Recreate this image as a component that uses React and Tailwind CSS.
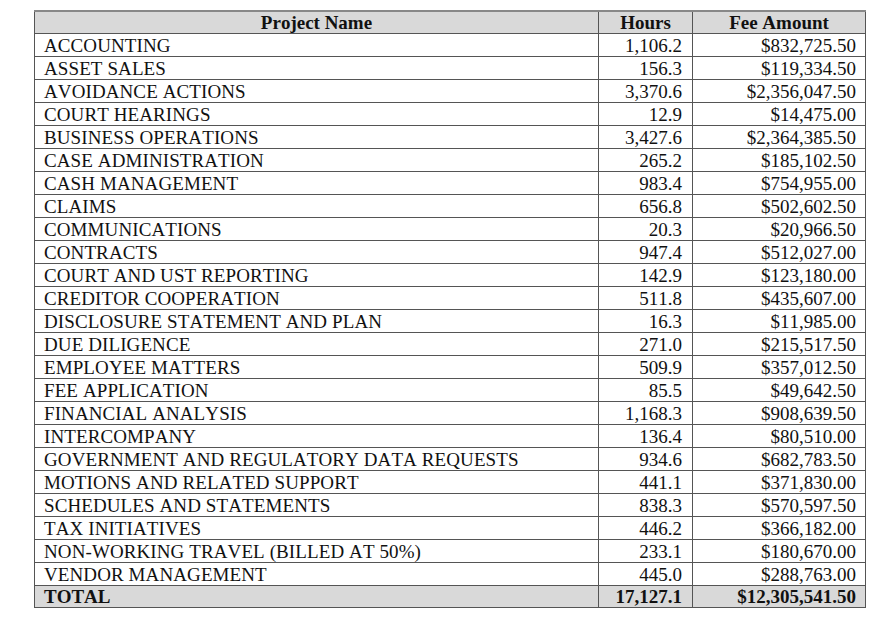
const rows = [
  ["ACCOUNTING", "1,106.2", "$832,725.50"],
  ["ASSET SALES", "156.3", "$119,334.50"],
  ["AVOIDANCE ACTIONS", "3,370.6", "$2,356,047.50"],
  ["COURT HEARINGS", "12.9", "$14,475.00"],
  ["BUSINESS OPERATIONS", "3,427.6", "$2,364,385.50"],
  ["CASE ADMINISTRATION", "265.2", "$185,102.50"],
  ["CASH MANAGEMENT", "983.4", "$754,955.00"],
  ["CLAIMS", "656.8", "$502,602.50"],
  ["COMMUNICATIONS", "20.3", "$20,966.50"],
  ["CONTRACTS", "947.4", "$512,027.00"],
  ["COURT AND UST REPORTING", "142.9", "$123,180.00"],
  ["CREDITOR COOPERATION", "511.8", "$435,607.00"],
  ["DISCLOSURE STATEMENT AND PLAN", "16.3", "$11,985.00"],
  ["DUE DILIGENCE", "271.0", "$215,517.50"],
  ["EMPLOYEE MATTERS", "509.9", "$357,012.50"],
  ["FEE APPLICATION", "85.5", "$49,642.50"],
  ["FINANCIAL ANALYSIS", "1,168.3", "$908,639.50"],
  ["INTERCOMPANY", "136.4", "$80,510.00"],
  ["GOVERNMENT AND REGULATORY DATA REQUESTS", "934.6", "$682,783.50"],
  ["MOTIONS AND RELATED SUPPORT", "441.1", "$371,830.00"],
  ["SCHEDULES AND STATEMENTS", "838.3", "$570,597.50"],
  ["TAX INITIATIVES", "446.2", "$366,182.00"],
  ["NON-WORKING TRAVEL (BILLED AT 50%)", "233.1", "$180,670.00"],
  ["VENDOR MANAGEMENT", "445.0", "$288,763.00"],
];

export default function App() {
  return (
    <div className="min-h-screen bg-white pt-[10px] pl-[34px] font-['Liberation_Serif',serif] text-[19px] leading-[21px] text-[#111] [font-kerning:none]">
      <table className="w-[832px] table-fixed border-collapse border-t-2 border-t-[#888] border-x border-b border-[#555]">
        <colgroup>
          <col className="w-[564px]" />
          <col className="w-[94px]" />
          <col />
        </colgroup>
        <thead>
          <tr className="bg-[#d9d9d9]">
            <th className="h-[22px] border-x border-b border-[#555] p-0 text-center font-bold">
              Project Name
            </th>
            <th className="border-x border-b border-[#555] p-0 text-center font-bold">
              Hours
            </th>
            <th className="border-x border-b border-[#555] p-0 text-center font-bold">
              Fee Amount
            </th>
          </tr>
        </thead>
        <tbody>
          {rows.map(([name, hours, fee]) => (
            <tr key={name}>
              <td className="h-[23px] border border-[#555] py-0 pl-[9px] pr-0 tracking-[0.1px]">
                {name}
              </td>
              <td className="border border-[#555] py-0 pl-0 pr-[10px] text-right">
                {hours}
              </td>
              <td className="border border-[#555] py-0 pl-0 pr-[9px] text-right">
                {fee}
              </td>
            </tr>
          ))}
          <tr className="bg-[#d9d9d9] font-bold">
            <td className="h-[22px] border border-[#555] py-0 pl-[9px] pr-0">
              TOTAL
            </td>
            <td className="border border-[#555] py-0 pl-0 pr-[10px] text-right">
              17,127.1
            </td>
            <td className="border border-[#555] py-0 pl-0 pr-[9px] text-right">
              $12,305,541.50
            </td>
          </tr>
        </tbody>
      </table>
    </div>
  );
}
